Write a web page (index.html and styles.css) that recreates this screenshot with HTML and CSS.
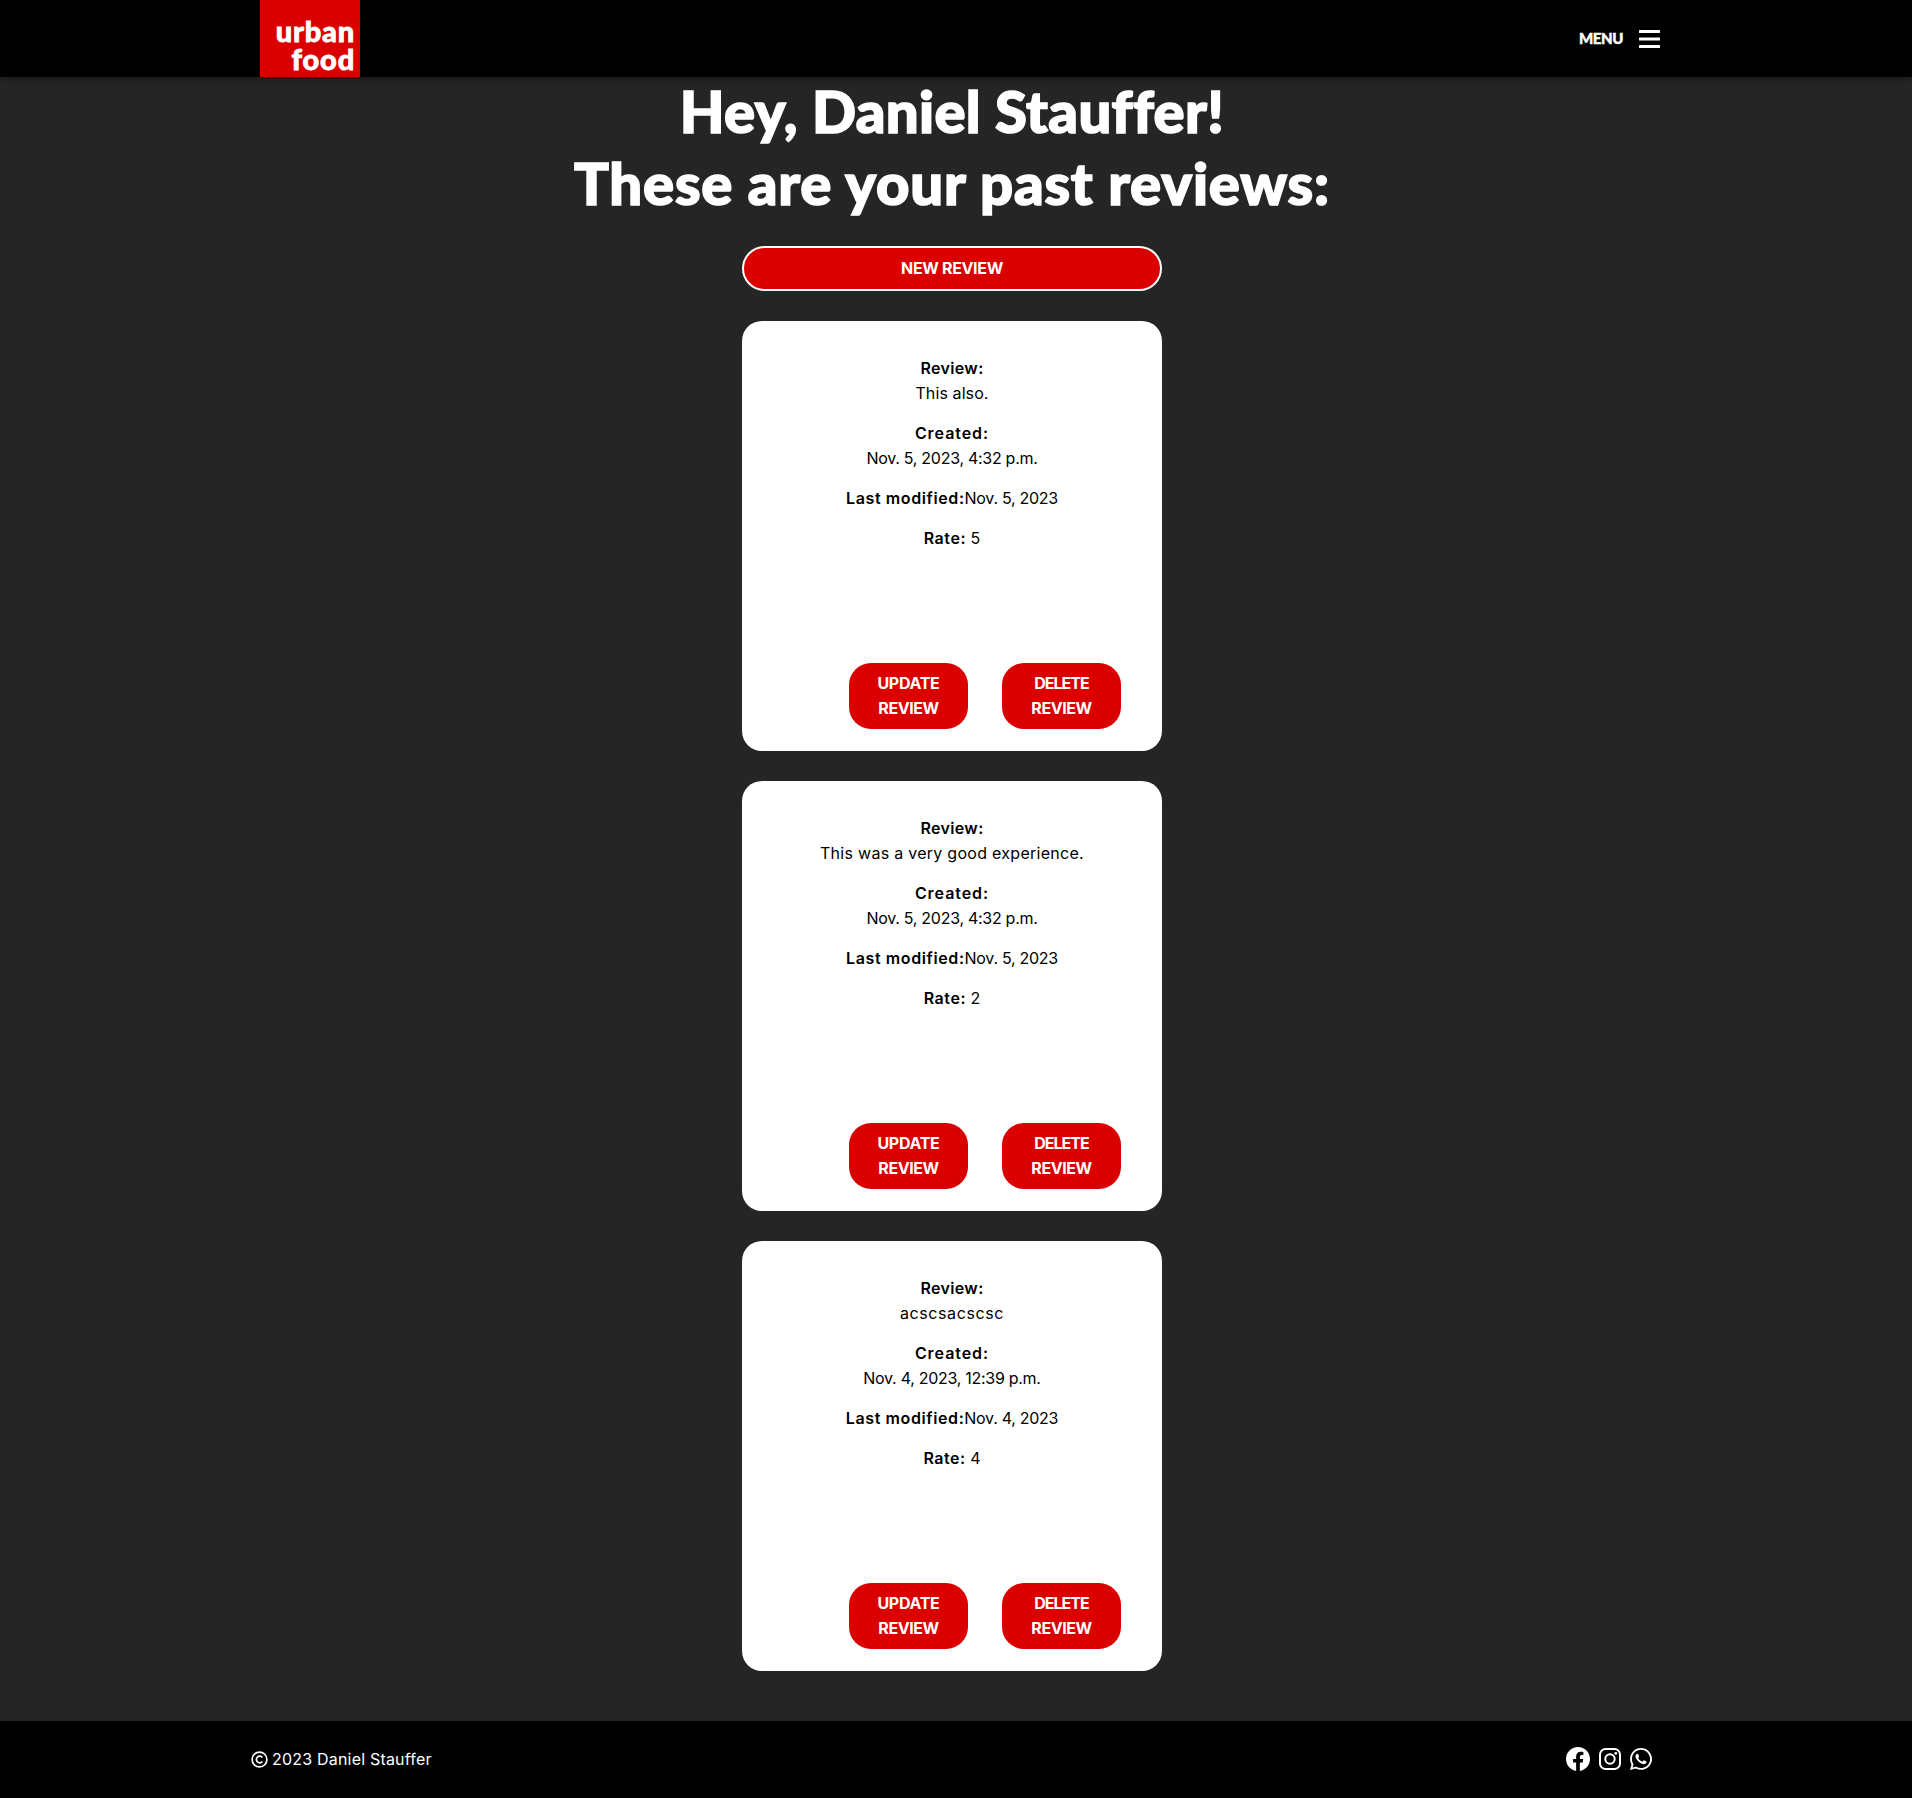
FILE: index.html
```
<!DOCTYPE html>
<html lang="en">
<head>
<meta charset="utf-8">
<title>Urban Food - Reviews</title>
<link rel="stylesheet" href="styles.css">
</head>
<body>
<header class="header">
  <a class="logo"><span class="logo-top">urban</span><span class="logo-bottom">food</span></a>
  <button class="menu"><span class="menu-label">MENU</span>
    <svg class="menu-icon" width="21" height="18" viewBox="0 0 21 18" fill="#fff"><rect width="21" height="3" rx=".6"/><rect y="7.5" width="21" height="3" rx=".6"/><rect y="15" width="21" height="3" rx=".6"/></svg>
  </button>
</header>
<main class="main">
  <h1 class="title"><span class="title-name">Hey, Daniel Stauffer!</span><br><span class="title-text">These are your past reviews:</span></h1>
  <a class="btn btn-new">NEW REVIEW</a>

  <article class="card">
    <p><b class="l-review">Review:</b><br><span class="short">This also.</span></p>
    <p><b class="l-created">Created:</b><br><span class="date">Nov. 5, 2023, 4:32 p.m.</span></p>
    <p><b class="l-modified">Last modified:</b><span class="date">Nov. 5, 2023</span></p>
    <p><b class="l-rate">Rate:</b> 5</p>
    <div class="actions"><a class="btn"><span class="b-update">UPDATE</span><span class="b-review">REVIEW</span></a><a class="btn"><span class="b-delete">DELETE</span><span class="b-review">REVIEW</span></a></div>
  </article>

  <article class="card">
    <p><b class="l-review">Review:</b><br><span class="long">This was a very good experience.</span></p>
    <p><b class="l-created">Created:</b><br><span class="date">Nov. 5, 2023, 4:32 p.m.</span></p>
    <p><b class="l-modified">Last modified:</b><span class="date">Nov. 5, 2023</span></p>
    <p><b class="l-rate">Rate:</b> 2</p>
    <div class="actions"><a class="btn"><span class="b-update">UPDATE</span><span class="b-review">REVIEW</span></a><a class="btn"><span class="b-delete">DELETE</span><span class="b-review">REVIEW</span></a></div>
  </article>

  <article class="card">
    <p><b class="l-review">Review:</b><br><span class="wide">acscsacscsc</span></p>
    <p><b class="l-created">Created:</b><br><span class="date">Nov. 4, 2023, 12:39 p.m.</span></p>
    <p><b class="l-modified">Last modified:</b><span class="date">Nov. 4, 2023</span></p>
    <p><b class="l-rate">Rate:</b> 4</p>
    <div class="actions"><a class="btn"><span class="b-update">UPDATE</span><span class="b-review">REVIEW</span></a><a class="btn"><span class="b-delete">DELETE</span><span class="b-review">REVIEW</span></a></div>
  </article>
</main>
<footer class="footer">
  <div class="copyright">
    <svg width="17" height="17" viewBox="0 0 17 17" fill="none" stroke="#fff" stroke-width="1.7"><circle cx="8.5" cy="8.5" r="7.4"/><path d="M11.3 6.5A3.3 3.3 0 1 0 11.3 10.5"/></svg>
    <span>2023 Daniel Stauffer</span>
  </div>
  <div class="social">
    <svg width="24" height="24" viewBox="0 0 24 24"><path fill="#fff" d="M24 12.07C24 5.41 18.63 0 12 0S0 5.41 0 12.07C0 18.1 4.39 23.1 10.13 24v-8.44H7.08v-3.49h3.05V9.41c0-3.02 1.79-4.69 4.53-4.69 1.31 0 2.68.24 2.68.24v2.97h-1.51c-1.49 0-1.96.93-1.96 1.89v2.25h3.33l-.53 3.49h-2.8V24C19.61 23.1 24 18.1 24 12.07z"/></svg>
    <svg width="22" height="22" viewBox="0 0 22 22" fill="none" stroke="#fff" stroke-width="2"><rect x="1" y="1" width="20" height="20" rx="5.6"/><circle cx="11" cy="11" r="4.7"/><circle cx="16.8" cy="5.3" r="1.4" fill="#fff" stroke="none"/></svg>
    <svg width="22" height="22" viewBox="0 0 448 448" fill="#fff"><path d="M380.900 65.100C339 23.100 283.200 0 223.900 0c-122.400 0-222 99.600-222 222 0 39.100 10.200 77.300 29.600 111L0 448l117.700-30.900c32.400 17.700 68.900 27 106.100 27h.1c122.300 0 224.100-99.600 224.100-222 0-59.300-25.200-115-67.100-157zm-157 341.600c-33.200 0-65.700-8.900-94-25.700l-6.700-4-69.800 18.300L72 327.200l-4.400-7c-18.500-29.400-28.200-63.300-28.200-98.200 0-101.700 82.800-184.500 184.600-184.500 49.300 0 95.600 19.200 130.400 54.100 34.800 34.900 56.200 81.200 56.100 130.500 0 101.800-84.900 184.600-186.600 184.600zm101.200-138.200c-5.500-2.800-32.800-16.200-37.900-18-5.100-1.900-8.800-2.800-12.500 2.800-3.700 5.600-14.300 18-17.600 21.800-3.200 3.700-6.500 4.200-12 1.400-32.600-16.300-54-29.100-75.500-66-5.700-9.800 5.700-9.100 16.300-30.300 1.800-3.700.9-6.900-.5-9.700-1.400-2.800-12.500-30.100-17.100-41.200-4.500-10.800-9.100-9.300-12.500-9.500-3.200-.2-6.900-.2-10.600-.2-3.700 0-9.700 1.400-14.800 6.900-5.100 5.600-19.400 19-19.400 46.300 0 27.300 19.900 53.700 22.600 57.400 2.800 3.700 39.100 59.700 94.800 83.800 35.200 15.200 49 16.500 66.600 13.900 10.700-1.600 32.800-13.400 37.400-26.400 4.600-13 4.600-24.100 3.200-26.400-1.300-2.500-5-3.900-10.500-6.600z"/></svg>
  </div>
</footer>
</body>
</html>
```
FILE: styles.css
```
* { box-sizing: border-box; }
body {
  margin: 0;
  min-height: 1798px;
  display: flex;
  flex-direction: column;
  background: #252525;
  font: 400 16px/25px Inter, "Noto Sans", sans-serif;
  color: #000;
}
.header {
  position: relative;
  height: 77px;
  padding: 0 252px 0 260px;
  display: flex;
  justify-content: space-between;
  align-items: center;
  background: #000;
  box-shadow: 0 2px 6px rgba(0, 0, 0, .4);
}
.logo {
  width: 100px;
  height: 77px;
  padding: 17px 5px 0 0;
  display: flex;
  flex-direction: column;
  align-items: flex-end;
  background: #db0000;
  color: #fff;
  font: 900 29px/28px Lato, sans-serif;
  letter-spacing: .8px;
  -webkit-text-stroke: .8px #fff;
}
.menu {
  padding: 0;
  border: 0;
  background: none;
  display: flex;
  align-items: center;
  gap: 16px;
  color: #fff;
  font: 900 15px/20px Lato, sans-serif;
  letter-spacing: -.4px;
}
.menu-label {
  padding-bottom: 2px;
  -webkit-text-stroke: .4px #fff;
}
.main {
  display: flex;
  flex-direction: column;
  align-items: center;
  gap: 30px;
  width: 1904px;
  margin-top: -2px;
}
.title {
  position: relative;
  margin: 0 0 -3px;
  color: #fff;
  font: 900 58px/72px Lato, sans-serif;
  text-align: center;
  -webkit-text-stroke: 1.6px #fff;
}
.title-name { letter-spacing: .35px; }
.title-text { letter-spacing: .8px; }
.btn {
  display: flex;
  flex-direction: column;
  align-items: center;
  width: 119px;
  padding: 8px 0;
  border-radius: 22px;
  background: #db0000;
  color: #fff;
  font-weight: 650;
}
.btn-new {
  width: 420px;
  border: 2px solid #fff;
  border-radius: 23px;
  letter-spacing: -.35px;
}
.card {
  width: 420px;
  height: 430px;
  padding: 35px 41px 22px;
  display: flex;
  flex-direction: column;
  gap: 15px;
  border-radius: 20px;
  background: #fff;
  text-align: center;
}
.card p { margin: 0; }
.card b { font-weight: 600; }
.actions {
  margin-top: auto;
  display: flex;
  justify-content: flex-end;
  gap: 34px;
}
.b-update { letter-spacing: -.3px; }
.b-review { letter-spacing: -.45px; }
.b-delete { letter-spacing: -.95px; }
.l-review { letter-spacing: .35px; }
.l-created { letter-spacing: .95px; }
.l-modified { letter-spacing: .6px; }
.l-rate { letter-spacing: .55px; }
.date { letter-spacing: -.28px; }
.short { letter-spacing: .1px; }
.long { letter-spacing: .28px; }
.wide { letter-spacing: .6px; }
.footer {
  margin-top: auto;
  height: 77px;
  padding: 0 260px 0 251px;
  display: flex;
  justify-content: space-between;
  align-items: center;
  background: #000;
  color: #fff;
}
.copyright {
  display: flex;
  align-items: center;
  gap: 4px;
  letter-spacing: .2px;
}
.social {
  padding-bottom: 1px;
  display: flex;
  align-items: center;
  gap: 9px;
}
```
